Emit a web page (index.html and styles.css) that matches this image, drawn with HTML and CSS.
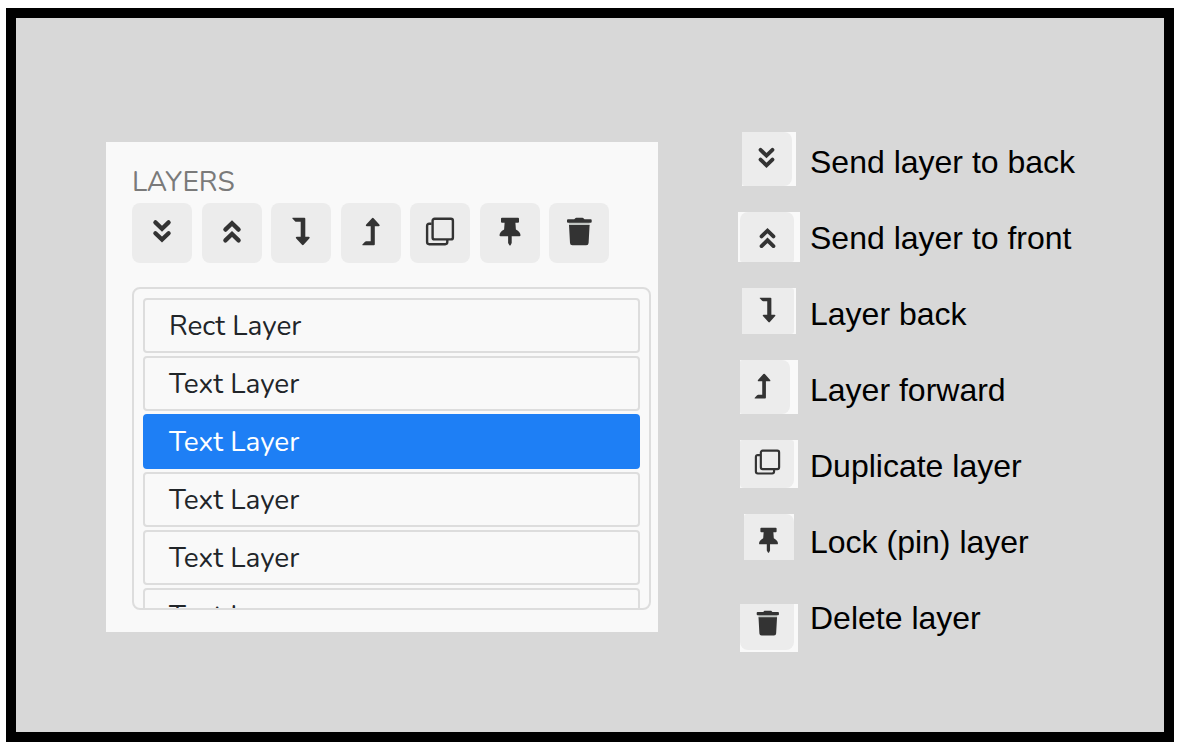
FILE: index.html
```html
<!DOCTYPE html>
<html lang="en">
<head>
  <title>Layers panel</title>
  <meta charset="utf-8">
  <meta name="viewport" content="width=device-width, initial-scale=1.0">
  <link rel="stylesheet" href="styles.css">
</head>

<body>
  <!-- Icons shared by the toolbar and the legend -->
  <svg class="icon-defs" aria-hidden="true">
    <symbol id="to-back" viewBox="0 0 30 30">
      <path class="stroke-thick" d="M8.4 5.4L15 11.8L21.6 5.4M8.4 16.2L15 22.6L21.6 16.2"/>
    </symbol>
    <symbol id="to-front" viewBox="0 0 30 30">
      <path class="stroke-thick" d="M8.4 12.6L15 6.2L21.6 12.6M8.4 23.4L15 17L21.6 23.4"/>
    </symbol>
    <symbol id="back" viewBox="0 0 30 30">
      <path d="M6.7 .7H18.3Q19.3 .7 19.3 1.7V19.7H22.7Q24.5 20 23.3 21.5L17.6 27.8Q16.8 28.7 16 27.8L10.2 21.5Q9 20 10.8 19.7H14.7V4.7H10.2Q9.4 4.7 9 4.2L6.4 1.5Q6 .8 6.7 .7Z"/>
    </symbol>
    <symbol id="forward" viewBox="0 0 30 30">
      <path d="M6.7 28.3H17.8Q18.8 28.3 18.8 27.3V9.3H22.7Q24.5 9 23.3 7.5L17.6 1.2Q16.8 .3 16 1.2L10.2 7.5Q9 9 10.8 9.3H14.7V24.3H10.2Q9.4 24.3 9 24.8L6.4 27.5Q6 28.2 6.7 28.3Z"/>
    </symbol>
    <symbol id="duplicate" viewBox="0 0 30 30">
      <path class="stroke-thin" d="M6.6 6.8H4.2Q2.1 6.8 2.1 8.9V25.1Q2.1 27.2 4.2 27.2H20.2Q22.3 27.2 22.3 25.1V22.5"/>
      <rect class="stroke-thin" x="7.6" y="1.8" width="20.3" height="20.6" rx="2"/>
    </symbol>
    <symbol id="pin" viewBox="0 0 30 30">
      <path d="M7 .7H23Q24 .7 24 1.7V4.7Q24 5.7 23 5.7H20.4L20.9 12.4Q25.5 14.8 25.5 18.2Q25.5 19.3 24.4 19.3H16.7V26L15.6 28.2Q15 28.9 14.4 28.2L13.1 26V19.3H5.6Q4.5 19.3 4.5 18.2Q4.5 14.8 9.1 12.4L9.6 5.7H7Q6 5.7 6 4.7V1.7Q6 .7 7 .7Z"/>
    </symbol>
    <symbol id="trash" viewBox="0 0 30 30">
      <path class="trash-gap" d="M5 5H25.6V9H5Z"/>
      <path d="M4 2.2H10.2L11.6 .9Q11.9 .7 12.3 .7H18.4Q18.8 .7 19.1 .9L20.5 2.2H26.7Q27.7 2.2 27.7 3.2V4.7Q27.7 5.7 26.7 5.7H4Q3 5.7 3 4.7V3.2Q3 2.2 4 2.2Z"/>
      <path d="M5 8H25.6L24.6 26Q24.5 28.3 22.2 28.3H8.4Q6.1 28.3 6 26Z"/>
    </symbol>
  </svg>

  <main class="frame">
    <section class="panel">
      <h1 class="panel-title">LAYERS</h1>

      <div class="toolbar">
        <button class="tool" type="button" aria-label="Send layer to back"><svg class="icon"><use href="#to-back"/></svg></button>
        <button class="tool" type="button" aria-label="Send layer to front"><svg class="icon"><use href="#to-front"/></svg></button>
        <button class="tool" type="button" aria-label="Layer back"><svg class="icon"><use href="#back"/></svg></button>
        <button class="tool" type="button" aria-label="Layer forward"><svg class="icon"><use href="#forward"/></svg></button>
        <button class="tool" type="button" aria-label="Duplicate layer"><svg class="icon"><use href="#duplicate"/></svg></button>
        <button class="tool" type="button" aria-label="Lock (pin) layer"><svg class="icon"><use href="#pin"/></svg></button>
        <button class="tool" type="button" aria-label="Delete layer"><svg class="icon"><use href="#trash"/></svg></button>
      </div>

      <ul class="layers">
        <li><button class="layer" type="button">Rect Layer</button></li>
        <li><button class="layer" type="button">Text Layer</button></li>
        <li><button class="layer selected" type="button">Text Layer</button></li>
        <li><button class="layer" type="button">Text Layer</button></li>
        <li><button class="layer" type="button">Text Layer</button></li>
        <li><button class="layer" type="button">Text Layer</button></li>
      </ul>
    </section>

    <ul class="legend">
      <li class="legend-row">
        <span class="swatch swatch-to-back"><span class="tile"><svg class="icon"><use href="#to-back"/></svg></span></span>
        <span>Send layer to back</span>
      </li>
      <li class="legend-row">
        <span class="swatch swatch-to-front"><span class="tile"><svg class="icon"><use href="#to-front"/></svg></span></span>
        <span>Send layer to front</span>
      </li>
      <li class="legend-row">
        <span class="swatch swatch-back"><span class="tile"><svg class="icon"><use href="#back"/></svg></span></span>
        <span>Layer back</span>
      </li>
      <li class="legend-row">
        <span class="swatch swatch-forward"><span class="tile"><svg class="icon"><use href="#forward"/></svg></span></span>
        <span>Layer forward</span>
      </li>
      <li class="legend-row">
        <span class="swatch swatch-duplicate"><span class="tile"><svg class="icon"><use href="#duplicate"/></svg></span></span>
        <span>Duplicate layer</span>
      </li>
      <li class="legend-row">
        <span class="swatch swatch-pin"><span class="tile"><svg class="icon"><use href="#pin"/></svg></span></span>
        <span>Lock (pin) layer</span>
      </li>
      <li class="legend-row">
        <span class="swatch swatch-trash"><span class="tile"><svg class="icon"><use href="#trash"/></svg></span></span>
        <span>Delete layer</span>
      </li>
    </ul>
  </main>
</body>
</html>
```

FILE: styles.css
```css
* {
  box-sizing: border-box;
}

body {
  margin: 0;
  padding: 8px 6px 10px;
  min-height: 100vh;
  display: flex;
  background-color: #ffffff;
  font-family: "Liberation Sans", Arial, sans-serif;
}

ul {
  margin: 0;
  padding: 0;
  list-style: none;
}

.frame {
  flex: 1;
  display: flex;
  align-items: center;
  gap: 80px;
  padding: 30px 60px 0 90px;
  border: 10px solid #000000;
  background-color: #d8d8d8;
}

/* Icons */

.icon-defs {
  position: absolute;
  width: 0;
  height: 0;
}

.icon {
  display: block;
  flex: none;
  width: 30px;
  height: 30px;
  fill: #333333;
}

.stroke-thick {
  fill: none;
  stroke: #333333;
  stroke-width: 4.3;
  stroke-linecap: round;
}

.stroke-thin {
  fill: none;
  stroke: #333333;
  stroke-width: 2.4;
}

.trash-gap {
  fill: #c2c6c3;
}

/* Layers panel */

.panel {
  flex: 0 1 552px;
  margin-bottom: 6px;
  padding: 24px 7px 22px 26px;
  background-color: #f9f9f9;
  font-family: Nunito, Lato, sans-serif;
}

.panel-title {
  margin: 0 0 5px;
  font-size: 28px;
  font-weight: 400;
  line-height: 32px;
  color: #7a7a7a;
}

.toolbar {
  display: flex;
  justify-content: space-between;
  max-width: 477px;
  margin-bottom: 24px;
}

.tool {
  display: flex;
  align-items: center;
  justify-content: center;
  width: 60px;
  height: 60px;
  padding: 0 0 2px;
  border: none;
  border-radius: 8px;
  background-color: #ececec;
  cursor: pointer;
}

.layers {
  display: flex;
  flex-direction: column;
  gap: 3px;
  height: 323px;
  padding: 9px;
  overflow: hidden;
  border: 2px solid #dddddd;
  border-radius: 8px;
}

.layer {
  display: block;
  width: 100%;
  height: 55px;
  padding: 0 24px;
  border: 2px solid #dddddd;
  border-radius: 4px;
  background-color: #f9f9f9;
  color: #212529;
  font-family: inherit;
  font-size: 28px;
  line-height: 50px;
  text-align: left;
  cursor: pointer;
}

.layer.selected {
  border-color: #1e7ff5;
  background-color: #1e7ff5;
  color: #ffffff;
}

/* Legend */

.legend-row {
  display: grid;
  grid-template-columns: 62px auto;
  align-items: center;
  gap: 10px;
  height: 76px;
  font-size: 32px;
  line-height: 36px;
  white-space: nowrap;
  color: #000000;
}

.swatch {
  display: flex;
  justify-self: center;
  margin-bottom: 6px;
  background-color: #f9f9f9;
}

.swatch .icon {
  width: 27px;
  height: 27px;
}

.tile {
  flex: 1;
  display: flex;
  align-items: center;
  justify-content: center;
  background-color: #ececec;
}

.swatch-to-back {
  width: 54px;
  height: 54px;
  padding-right: 4px;
}

.swatch-to-back .tile {
  padding: 0 2px 2px 0;
  border-radius: 0 8px 8px 3px;
}

.swatch-to-front {
  width: 62px;
  height: 50px;
  margin-bottom: 2px;
  padding: 0 6px 0 2px;
}

.swatch-to-front .tile {
  padding-top: 3px;
  border-radius: 8px 8px 2px 2px;
}

.swatch-back {
  width: 54px;
  height: 46px;
  padding-right: 2px;
}

.swatch-back .tile {
  padding: 0 2px 2px 0;
  border-radius: 0 3px 3px 0;
}

.swatch-forward {
  width: 58px;
  height: 54px;
  padding-right: 8px;
}

.swatch-forward .tile {
  padding: 0 5px 2px 0;
  border-radius: 2px 8px 8px 2px;
}

.swatch-duplicate {
  width: 58px;
  height: 48px;
  margin-bottom: 4px;
  padding-right: 4px;
}

.swatch-duplicate .tile {
  padding-bottom: 4px;
  border-radius: 2px 3px 8px 4px;
}

.swatch-pin {
  width: 50px;
  height: 46px;
  margin-bottom: 10px;
}

.swatch-pin .tile {
  padding: 6px 2px 0 0;
  border-radius: 3px 8px 0 0;
}

.swatch-trash {
  align-self: end;
  width: 58px;
  height: 48px;
  margin-bottom: 4px;
  padding: 0 4px 2px 0;
}

.swatch-trash .tile {
  padding-bottom: 8px;
  border-radius: 0 0 8px 8px;
}
```
